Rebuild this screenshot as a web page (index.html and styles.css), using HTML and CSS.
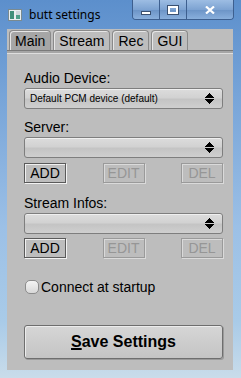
FILE: index.html
```html
<!DOCTYPE html>
<html>

<head>
    <meta charset="utf-8">
    <title>butt settings</title>
    <link rel="stylesheet" href="styles.css">
</head>

<body>
    <div class="window">
        <!-- title bar with icon, caption and the three window buttons -->
        <div class="titlebar">
            <svg class="appIcon" width="14" height="12" viewBox="0 0 14 12">
                <rect x="0.5" y="0.5" width="13" height="11" fill="#e8eef0" stroke="#7a8a90"/>
                <rect x="2" y="2" width="4" height="8" fill="#3f8f7a"/>
                <rect x="8" y="2" width="4" height="8" fill="#cfd8dc"/>
                <rect x="8" y="6" width="4" height="4" fill="#4f9f8a"/>
            </svg>
            <span class="title">butt settings</span>
            <div class="captionButtons">
                <div class="capBtn minBtn"><span class="minGlyph"></span></div>
                <div class="capBtn maxBtn"><span class="maxGlyph"></span></div>
                <div class="capBtn closeBtn">
                    <svg width="10" height="8" viewBox="0 0 10 8">
                        <path d="M1 0.5 L9 7.5 M9 0.5 L1 7.5" stroke="#fff" stroke-width="2.2"/>
                    </svg>
                </div>
            </div>
        </div>

        <div class="client">
            <div class="tabs">
                <div class="tab selected">Main</div>
                <div class="tab">Stream</div>
                <div class="tab">Rec</div>
                <div class="tab">GUI</div>
            </div>

            <div class="panel">
                <div class="label first">Audio Device:</div>
                <div class="choice">
                    <span class="choiceText">Default PCM device (default)</span>
                    <span class="arrows"></span>
                </div>

                <div class="label">Server:</div>
                <div class="choice"><span class="choiceText"></span><span class="arrows"></span></div>
                <div class="btnRow">
                    <div class="btn">ADD</div>
                    <div class="btn disabled">EDIT</div>
                    <div class="btn disabled">DEL</div>
                </div>

                <div class="label afterRow">Stream Infos:</div>
                <div class="choice"><span class="choiceText"></span><span class="arrows"></span></div>
                <div class="btnRow tight">
                    <div class="btn">ADD</div>
                    <div class="btn disabled">EDIT</div>
                    <div class="btn disabled">DEL</div>
                </div>

                <div class="checkRow">
                    <span class="checkBox"></span>
                    <span>Connect at startup</span>
                </div>

                <div class="saveBtn"><u>S</u>ave Settings</div>
            </div>
        </div>
    </div>
</body>

</html>
```

FILE: styles.css
```css
/* FLTK look inside a Win7 aero frame */
html,
body {
    margin: 0;
    padding: 0;
}

body {
    width: 241px;
    height: 378px;
    overflow: hidden;
    font-family: "Liberation Sans", Arial, sans-serif;
}

.window {
    width: 241px;
    height: 378px;
    background: linear-gradient(180deg, #5c8fcc 0%, #77a4d8 25%, #9cc0e6 60%, #a9cbe8 85%, #c9dcea 100%);
    display: flex;
    flex-direction: column;
}

.titlebar {
    height: 29px;
    display: flex;
    align-items: flex-start;
    position: relative;
}

.appIcon {
    margin: 9px 0 0 8px;
}

.title {
    margin: 6px 0 0 7px;
    font-family: "Noto Sans", "DejaVu Sans", sans-serif;
    font-size: 12px;
    color: #000;
}

.captionButtons {
    position: absolute;
    top: 0;
    left: 132px;
    display: flex;
    height: 19px;
    border: 1px solid #3d5f8f;
    border-top: none;
    border-radius: 0 0 4px 4px;
    overflow: hidden;
}

.capBtn {
    height: 19px;
    display: flex;
    align-items: center;
    justify-content: center;
    background: linear-gradient(180deg, #9dbde3 0%, #7da3d2 50%, #6b93c6 51%, #89afdc 100%);
}

.minBtn {
    width: 26px;
    border-right: 1px solid #3d5f8f;
}

.maxBtn {
    width: 26px;
    border-right: 1px solid #3d5f8f;
}

.closeBtn {
    width: 46px;
}

.minGlyph {
    width: 8px;
    height: 2px;
    margin-top: 6px;
    background: #fff;
    border: 1px solid #3a5070;
}

.maxGlyph {
    width: 6px;
    height: 4px;
    border: 2px solid #fff;
    outline: 1px solid #3a5070;
}

.client {
    margin: 0 8px 8px 7px;
    flex: 1;
    background: #bdbdbd;
    display: flex;
    flex-direction: column;
}

.tabs {
    display: flex;
    gap: 2px;
    padding: 1px 0 0 2px;
    height: 20px;
}

.tab {
    height: 19px;
    padding: 0 5px;
    font-size: 14px;
    line-height: 21px;
    color: #000;
    background: #bdbdbd;
    border: 1px solid #8a8a8a;
    border-bottom: none;
    border-radius: 4px 4px 0 0;
    box-shadow: inset 1px 1px 0 #e6e6e6;
}

.tab.selected {
    background: #a6a6a6;
    height: 20px;
}

.panel {
    flex: 1;
    border-top: 1px solid #7a7a7a;
    box-shadow: inset 0 1px 0 #a6a6a6, inset 0 2px 0 #a6a6a6, inset 0 3px 0 #dedede;
    padding: 0 10px 0 17px;
    display: flex;
    flex-direction: column;
}

.label {
    font-size: 14px;
    line-height: 16px;
    height: 16px;
    color: #000;
    margin-top: 10px;
}

.label.first {
    margin-top: 19px;
}

.label.afterRow {
    margin-top: 12px;
}

.choice {
    height: 19px;
    margin-top: 2px;
    border: 1px solid #7e7e7e;
    border-radius: 3px;
    background: linear-gradient(180deg, #dcdcdc 0%, #d2d2d2 45%, #c4c4c4 55%, #cfcfcf 100%);
    box-shadow: inset 0 1px 0 #efefef;
    display: flex;
    align-items: center;
    justify-content: space-between;
    padding: 0 8px 0 5px;
}

.choiceText {
    font-size: 10px;
    color: #000;
}

.arrows {
    width: 9px;
    height: 11px;
    background:
        conic-gradient(from 135deg at 50% 0, #000 90deg, transparent 0) top / 9px 5px no-repeat,
        conic-gradient(from -45deg at 50% 100%, #000 90deg, transparent 0) bottom / 9px 5px no-repeat;
}

.btnRow {
    display: flex;
    justify-content: space-between;
    margin-top: 5px;
}

.btnRow.tight {
    margin-top: 4px;
}

.btn {
    width: 40px;
    height: 18px;
    border: 1px solid #5a5a5a;
    box-shadow: inset 1px 1px 0 #f0f0f0, 1px 1px 0 #f2f2f2;
    font-size: 14px;
    line-height: 19px;
    text-align: center;
    color: #000;
}

.btn.disabled {
    color: #969696;
    border-color: #9a9a9a;
    box-shadow: inset 1px 1px 0 #dadada, 1px 1px 0 #dadada;
}

.checkRow {
    margin-top: 21px;
    display: flex;
    align-items: center;
    gap: 2px;
    font-size: 14px;
    color: #000;
    height: 16px;
}

.checkBox {
    width: 12px;
    height: 12px;
    margin-left: 1px;
    border: 1px solid #8c8c8c;
    border-radius: 5px;
    background: linear-gradient(180deg, #f4f4f4, #d8d8d8);
}

.saveBtn {
    margin-top: 30px;
    height: 32px;
    border: 1px solid #6e6e6e;
    border-radius: 3px;
    background: linear-gradient(180deg, #d6d6d6, #c4c4c4);
    box-shadow: inset 1px 1px 0 #ececec, 1px 1px 0 #9a9a9a;
    font-size: 16px;
    font-weight: bold;
    line-height: 32px;
    text-align: center;
    color: #000;
}

.saveBtn u {
    text-decoration-thickness: 2px;
}
```
